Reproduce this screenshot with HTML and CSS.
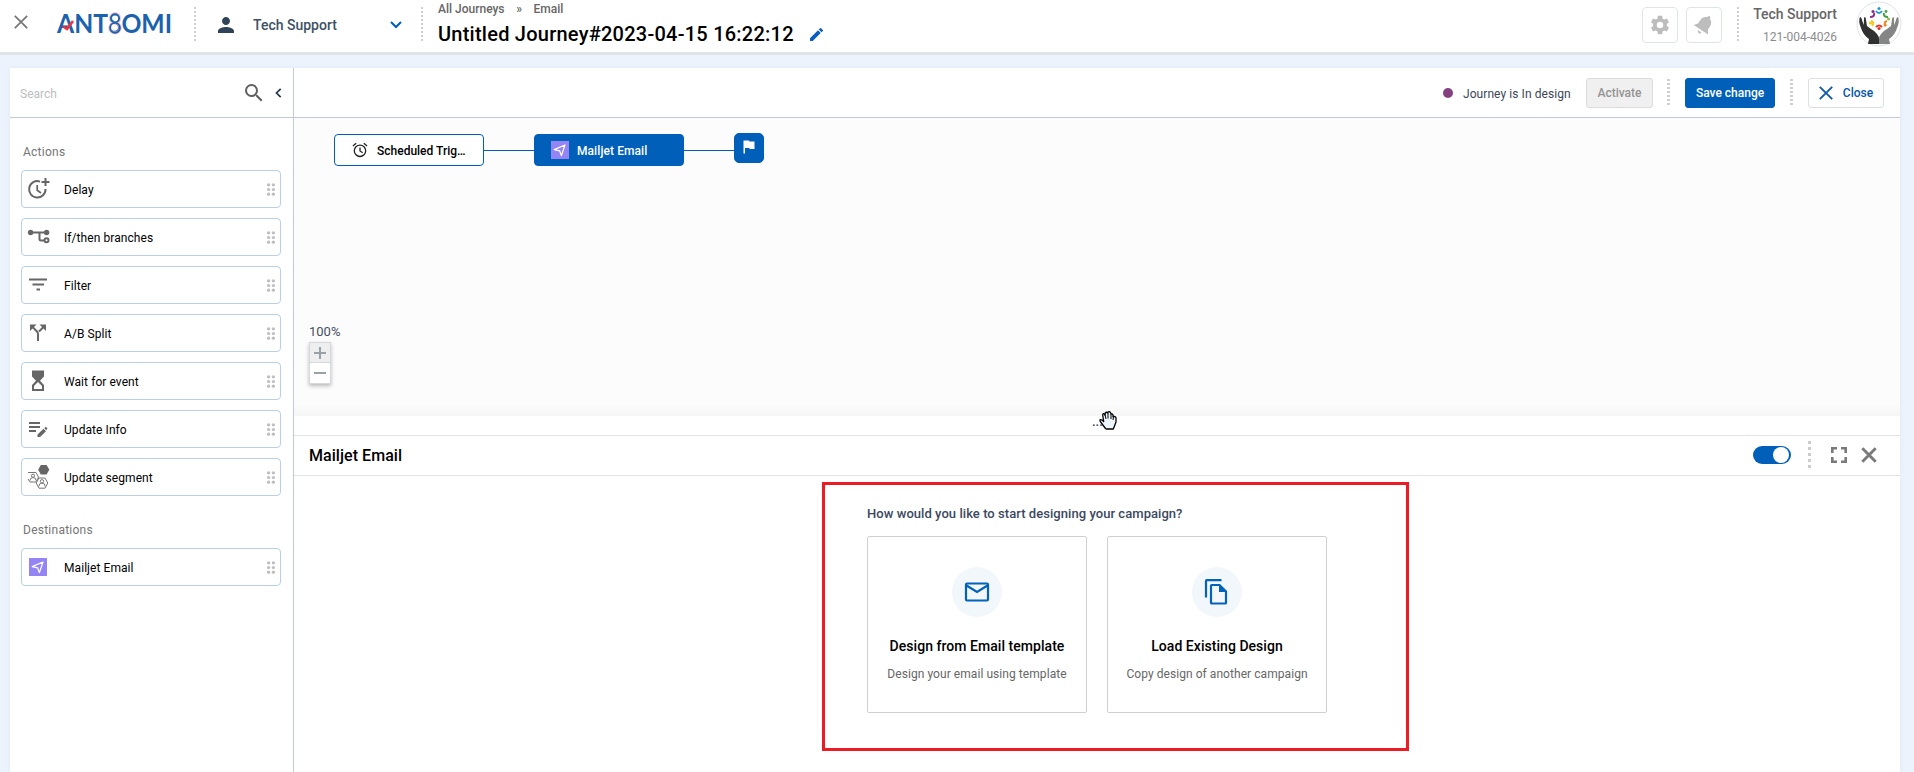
FILE: index.html
```html
<!DOCTYPE html>
<html lang="en">
<head>
<meta charset="utf-8">
<title>Untitled Journey</title>
<link rel="stylesheet" href="styles.css">
</head>
<body>
<svg class="defs" width="0" height="0">
  <symbol id="grip" viewBox="0 0 8 13"><g fill="#bdbdbd"><circle cx="1.6" cy="1.8" r="1.6"/><circle cx="6.4" cy="1.8" r="1.6"/><circle cx="1.6" cy="6.5" r="1.6"/><circle cx="6.4" cy="6.5" r="1.6"/><circle cx="1.6" cy="11.2" r="1.6"/><circle cx="6.4" cy="11.2" r="1.6"/></g></symbol>
  <symbol id="plane" viewBox="0 0 18 18"><rect width="18" height="18" fill="#9585f4"/><path d="M3.2 8.6 14 4 10.4 14.6 8.6 9.8Z" fill="none" stroke="#fff" stroke-width="1.2" stroke-linejoin="round"/></symbol>
</svg>
<header class="topbar">
  <svg class="leave" width="14" height="14" viewBox="0 0 14 14"><path d="M.8.8 13.2 13.2M13.2.8.8 13.2" stroke="#757575" stroke-width="1.7"/></svg>
  <svg class="logo" width="118" height="26" viewBox="0 0 118 26">
    <text class="logo-text" x="1" y="21.5" textLength="115" lengthAdjust="spacingAndGlyphs">ANT<tspan class="logo-s">S</tspan>OMI</text>
    <g fill="none"><g stroke="#f8ccd2" stroke-width="3"><circle cx="59" cy="7.300" r="4.700"/><circle cx="59" cy="16.800" r="5.300"/></g><g stroke="#1b62ae" stroke-width="1.900"><circle cx="59" cy="7.300" r="4.100"/><circle cx="59" cy="16.800" r="4.900"/></g></g>
    <path d="M7 15.500 11 18 17 10" fill="none" stroke="#ee3340" stroke-width="2.600"/>
  </svg>
  <i class="dots dots-a"></i>
  <svg class="person" width="16" height="16" viewBox="4 4 16 16"><path fill="#2f4459" d="M12 12c2.210 0 4-1.790 4-4s-1.790-4-4-4-4 1.790-4 4 1.790 4 4 4zm0 2c-2.670 0-8 1.340-8 4v2h16v-2c0-2.660-5.330-4-8-4z"/></svg>
  <span class="account">Tech Support</span>
  <svg class="chev" width="12" height="8" viewBox="0 0 12 8"><path d="M1 1 6 6 11 1" fill="none" stroke="#005fb8" stroke-width="2"/></svg>
  <i class="dots dots-b"></i>
  <div class="heading">
    <div class="crumbs"><span>All Journeys</span><span class="sep">»</span><span>Email</span></div>
    <div class="title-row"><h1>Untitled Journey#2023-04-15 16:22:12</h1>
      <svg width="13" height="13" viewBox="3 3 18 18"><path fill="#0a5cc0" d="M3 17.250V21h3.750L17.810 9.940l-3.750-3.750L3 17.250zM20.710 7.040a1 1 0 0 0 0-1.410l-2.340-2.340a1 1 0 0 0-1.410 0l-1.830 1.830 3.750 3.750 1.830-1.830z"/></svg></div>
  </div>
  <div class="top-right">
    <span class="icon-btn"><svg width="22" height="22" viewBox="0 0 24 24"><path fill="#bdbdbd" d="M19.430 12.980c.04-.32.07-.64.07-.98s-.03-.66-.07-.98l2.110-1.650c.19-.15.24-.42.12-.64l-2-3.460c-.12-.22-.39-.3-.61-.22l-2.490 1c-.52-.4-1.080-.73-1.690-.98l-.38-2.650C14.460 2.180 14.250 2 14 2h-4c-.25 0-.46.18-.49.42l-.38 2.650c-.61.25-1.170.59-1.690.98l-2.490-1c-.23-.09-.49 0-.61.22l-2 3.460c-.13.22-.07.49.12.64l2.110 1.650c-.04.32-.07.65-.07.98s.03.66.07.98l-2.110 1.650c-.19.15-.24.42-.12.64l2 3.460c.12.22.39.3.61.22l2.490-1c.52.4 1.080.73 1.690.98l.38 2.650c.03.24.24.42.49.42h4c.25 0 .46-.18.49-.42l.38-2.650c.61-.25 1.170-.59 1.690-.98l2.490 1c.23.09.49 0 .61-.22l2-3.460c.12-.22.07-.49-.12-.64l-2.110-1.650zM12 15.500a3.500 3.500 0 1 1 0-7 3.500 3.500 0 0 1 0 7z"/></svg></span>
    <span class="icon-btn"><svg width="24" height="24" viewBox="0 0 24 24"><g transform="rotate(33 12 12)" fill="#bdbdbd"><path d="M12 1.500c-.9 0-1.500.6-1.500 1.500v.7C7.800 4.500 6.200 6.800 6.200 9.700V14L3.400 17.700h17.200L17.800 14V9.700c0-2.900-1.600-5.200-4.300-6V3c0-.9-.6-1.500-1.500-1.500z"/><path d="M10 19.700h4a2 2 0 0 1-4 0z"/></g></svg></span>
    <i class="dots dots-c"></i>
    <div class="profile"><b>Tech Support</b><span>121-004-4026</span></div>
    <svg class="avatar" width="46" height="46" viewBox="0 0 46 46">
      <circle cx="23" cy="23" r="22" fill="#fff" stroke="#dde3ea"/>
      <path fill="#303030" d="M4 16q1.500 0 2.300 4l1.500 4 .2-7.500q1.400-1 1.800 1L11 25l4 3q4 2 6 5 2 2.500 2 5v5H12l1-5q-6-4-8-11Q2 20 4 16z"/>
      <path fill="#858585" d="M42 16q-1.500 0-2.300 4l-1.500 4-.2-7.500q-1.400-1-1.800 1L35 25l-4 3q-4 2-6 5-2 2.500-2 5v5h11l-1-5q6-4 8-11 3-7 1-11z"/>
      <g fill="none" stroke-width="2">
        <path stroke="#1f9ad6" d="M20 10q3 4 6 0"/><path stroke="#43a047" d="M28 12q-1 4 4 4"/><path stroke="#f58220" d="M31 20q-4 1-1 5"/><path stroke="#e53527" d="M26 26q-3-3-6 0"/><path stroke="#f6c51c" d="M16 25q3-4-1-5"/><path stroke="#8e2a91" d="M14 16q5 0 4-4"/>
      </g>
      <circle cx="23" cy="7.500" r="1.600" fill="#1f9ad6"/><circle cx="30" cy="10.500" r="1.400" fill="#43a047"/><circle cx="32.500" cy="18" r="1.500" fill="#8bc34a"/><circle cx="29" cy="24" r="1.500" fill="#f58220"/><circle cx="23" cy="27.500" r="1.600" fill="#e53527"/><circle cx="14.500" cy="22" r="1.600" fill="#f6c51c"/><circle cx="17" cy="10.500" r="1.600" fill="#8e2a91"/>
    </svg>
  </div>
</header>

<main class="workspace">
  <aside class="sidebar">
    <div class="search"><span>Search</span>
      <svg class="mag" width="18" height="18" viewBox="3 3 18 18"><path fill="#606060" d="M15.500 14h-.79l-.28-.27A6.470 6.470 0 0 0 16 9.500 6.500 6.500 0 1 0 9.500 16c1.610 0 3.090-.59 4.230-1.570l.27.28v.79l5 4.990L20.490 19l-4.990-5zm-6 0a4.500 4.500 0 1 1 0-9 4.500 4.500 0 0 1 0 9z"/></svg>
      <svg width="7" height="10" viewBox="0 0 7 10"><path d="M5.700.8 1.500 5 5.700 9.200" fill="none" stroke="#23384c" stroke-width="1.700"/></svg>
    </div>
    <h2 class="group">Actions</h2>
    <ul class="items">
      <li><svg class="ico" width="22" height="22" viewBox="0 0 22 22"><g fill="none" stroke="#666" stroke-width="2"><path d="M12 3.600A8.200 8.200 0 1 0 17.500 11"/><path d="M9.200 7v5.200L13 15" stroke-width="1.700"/><path d="M17.500 0v8M13.500 4h8"/></g></svg><span>Delay</span><svg class="grip" width="8" height="13"><use href="#grip"/></svg></li>
      <li><svg class="ico" width="22" height="22" viewBox="0 0 22 22"><g fill="none" stroke="#666" stroke-width="2"><path d="M2 6.500H19M11.500 7v6q0 1.500 1.500 1.500h3"/><circle cx="18.500" cy="14.200" r="2"/></g><circle cx="2.600" cy="6.500" r="2.700" fill="#666"/><circle cx="18.600" cy="6.500" r="2.700" fill="#666"/></svg><span>If/then branches</span><svg class="grip" width="8" height="13"><use href="#grip"/></svg></li>
      <li><svg class="ico" width="22" height="22" viewBox="0 0 22 22"><path d="M1 5.500H19M4.500 10.500H16M8.500 15.500H12" stroke="#666" stroke-width="2"/></svg><span>Filter</span><svg class="grip" width="8" height="13"><use href="#grip"/></svg></li>
      <li><svg class="ico" width="22" height="22" viewBox="0 0 22 22"><path d="M4.500 5 9 9.500q1 1 1 3V19M15.500 5 11 9.500" fill="none" stroke="#666" stroke-width="2"/><path fill="#666" d="M2 2.500H8.500L2 9zM18 2.500H11.500L18 9z"/></svg><span>A/B Split</span><svg class="grip" width="8" height="13"><use href="#grip"/></svg></li>
      <li><svg class="ico" width="22" height="22" viewBox="0 0 22 22"><path fill="#666" fill-rule="evenodd" d="M4 .5H16V6.500L12 10.800l4 4.300V21H4v-5.900l4-4.300L4 6.500zM10 12 6 16v3h8v-3z"/></svg><span>Wait for event</span><svg class="grip" width="8" height="13"><use href="#grip"/></svg></li>
      <li><svg class="ico" width="22" height="22" viewBox="0 0 22 22"><path d="M1 5H12M1 9H12M1 13H8" stroke="#666" stroke-width="1.800"/><path fill="#666" d="M9.500 19v-2.600l6-5.600 2.500 2.500-6 5.700zM16.300 10l1.500-1.300 1.700 1.700-1.300 1.800z"/></svg><span>Update Info</span><svg class="grip" width="8" height="13"><use href="#grip"/></svg></li>
      <li><svg class="ico" width="22" height="26" viewBox="0 0 22 26"><path fill="#666" d="M12.800 1h5.800l2.700 4.800-2.700 4.800h-5.800L10.200 5.800z"/><g fill="#fff" stroke="#777"><path d="M0 8.500h8L10.500 13 8 18H2L0 15"/><path d="M11 14h6l2.800 5-2.800 5.200h-6L8.200 19z"/><circle cx="5" cy="11.700" r="1.600"/><path d="M2 16.500q0-3 3-3t3 3"/><circle cx="14" cy="17.300" r="1.700"/><path d="M10.800 22.500q0-3.400 3.200-3.400t3.200 3.400"/></g></svg><span>Update segment</span><svg class="grip" width="8" height="13"><use href="#grip"/></svg></li>
    </ul>
    <h2 class="group group-dest">Destinations</h2>
    <ul class="items">
      <li><svg class="ico tile" width="18" height="18"><use href="#plane"/></svg><span>Mailjet Email</span><svg class="grip" width="8" height="13"><use href="#grip"/></svg></li>
    </ul>
  </aside>

  <section class="content">
    <div class="toolbar">
      <i class="status-dot"></i><span class="status">Journey is In design</span>
      <button class="btn activate">Activate</button>
      <i class="dots short"></i>
      <button class="btn save">Save change</button>
      <i class="dots short short-last"></i>
      <button class="btn close"><svg width="14" height="14" viewBox="0 0 14 14"><path d="M.8.8 13.200 13.200M13.200.8.8 13.200" stroke="#1158ac" stroke-width="1.900"/></svg>Close</button>
    </div>
    <div class="canvas">
      <div class="flow">
        <div class="node trigger"><svg width="16" height="16" viewBox="0 0 16 16"><g fill="none" stroke="#222" stroke-width="1.300"><circle cx="8" cy="8.800" r="5.700"/><path d="M8 5.500V9l2.700 1.700M.9 4 4.200 1.300M15.100 4 11.800 1.300"/></g></svg><span>Scheduled Trig…</span></div>
        <i class="link"></i>
        <div class="node mail"><svg width="18" height="18"><use href="#plane"/></svg><span>Mailjet Email</span></div>
        <i class="link"></i>
        <div class="node flag"><svg width="12" height="14" viewBox="0 0 12 14"><path fill="#fff" d="M.5.500h5.500l.4 1H11.500V9H6.600l-.4-1H2v5.500H.5z"/></svg></div>
      </div>
      <div class="zoom"><span>100%</span><div class="zoom-btns"><i class="plus"><svg width="12" height="12"><path d="M0 6H12M6 0V12" stroke="#99a0a7" stroke-width="2"/></svg></i><i><svg width="12" height="12"><path d="M0 6H12" stroke="#99a0a7" stroke-width="2"/></svg></i></div></div>
    </div>
    <div class="resizer"><span>...</span>
      <svg class="hand" width="18" height="20" viewBox="0 0 18 20"><path fill="#edf5fd" stroke="#000" stroke-width="1.300" stroke-linejoin="round" d="M6.500 17.500 2 11.500Q.2 9 1.500 8.700q1.300-.2 3.200 1.800L3.700 4Q3.600 2.500 5 2.800L6 4 6.200 2q1.500-1.500 2.500 0L9 1q1.500-1 2.500.7L12 3q1.600-.5 2 1.200v1.500Q16.500 5 17 7v4l-1.500 4-1.200 3H7.200z"/><path d="M6 3.500 7 8M9 2v5.500M12 3v5M14.500 5.500 14 9" stroke="#000" stroke-width="1"/></svg>
    </div>
    <div class="panel-head"><h3>Mailjet Email</h3>
      <span class="toggle"><i></i></span><i class="round-dots"></i>
      <svg class="full" width="16" height="16" viewBox="0 0 16 16"><path d="M1.300 6V1.300H6M10 1.300h4.700V6M14.700 10v4.700H10M6 14.700H1.300V10" fill="none" stroke="#7a7a7a" stroke-width="2.600"/></svg>
      <svg width="16" height="16" viewBox="0 0 16 16"><path d="M1.300 1.300 14.700 14.700M14.700 1.300 1.300 14.700" stroke="#7a7a7a" stroke-width="2.900"/></svg>
    </div>
    <div class="stage">
      <div class="chooser">
        <h4>How would you like to start designing your campaign?</h4>
        <div class="cards">
          <div class="card"><span class="disc"><svg width="24" height="20" viewBox="0 0 24 20"><g fill="none" stroke="#0362ba" stroke-width="2.200"><rect x="1" y="1.500" width="22" height="17" rx="1"/><path d="M1.500 3.500 12 10 22.500 3.500"/></g></svg></span><b>Design from Email template</b><p>Design your email using template</p></div>
          <div class="card"><span class="disc disc-copy"><svg width="24" height="26" viewBox="0 0 24 26"><path d="M2 18.500V2q0-.8.800-.8H17.500M7 6.800q0-.8.800-.8h7.700l6.500 6.500v11.200q0 .8-.8.800H7.800q-.8 0-.8-.8z" fill="none" stroke="#0362ba" stroke-width="2.200"/><path d="M15 6v7h7z" fill="#0362ba"/></svg></span><b>Load Existing Design</b><p>Copy design of another campaign</p></div>
        </div>
      </div>
    </div>
  </section>
</main>
</body>
</html>
```
FILE: styles.css
```css
* { box-sizing: border-box; }
body { margin: 0; height: 772px; overflow: hidden; background: #ecf3fc; font-family: Roboto, "Liberation Sans", sans-serif; font-size: 12px; color: #000; display: flex; flex-direction: column; }
svg { display: block; flex: none; overflow: visible; }
.defs { position: absolute; }
h1, h2, h3, h4, p, ul { margin: 0; padding: 0; font-weight: 400; }
i { display: block; flex: none; }
button { font-family: inherit; }

.topbar { height: 55px; flex: none; background: #fff; border-bottom: 3px solid #e0e3ea; display: flex; align-items: flex-start; padding-left: 14px; }
.leave { margin-top: 15px; }
.logo { margin: 11px 0 0 28px; }
.logo-text { font: 700 26px Lato, sans-serif; fill: #1b62ae; }
.logo-s { font-weight: 400; }
.dots { width: 2px; height: 34px; margin-top: 7px; background: repeating-linear-gradient(#cfcfcf 0 2px, transparent 2px 4px); }
.dots-a { margin-left: 20px; }
.person { margin: 17px 0 0 22px; }
.account { width: 137px; margin: 16px 0 0 19px; font-size: 14px; line-height: 18px; font-weight: 500; color: #3d5166; }
.chev { margin-top: 21px; }
.dots-b { margin-left: 19px; }
.heading { margin-left: 15px; }
.crumbs { display: flex; height: 18px; line-height: 18px; font-weight: 500; color: #666; }
.sep { width: 29px; text-align: center; }
.title-row { display: flex; align-items: center; gap: 16px; height: 32px; }
.title-row h1 { font-size: 20px; font-weight: 500; white-space: nowrap; letter-spacing: .24px; }
.top-right { margin-left: auto; padding-right: 12px; display: flex; }
.icon-btn { width: 36px; height: 36px; margin: 7px 8px 0 0; border: 1px solid #dfe4ec; border-radius: 4px; display: flex; align-items: center; justify-content: center; }
.dots-c { margin-left: 7px; }
.profile { width: 98px; display: flex; flex-direction: column; align-items: flex-end; line-height: 18px; padding-top: 5px; gap: 5px; color: #8c8c8c; }
.profile b { font-size: 14px; font-weight: 500; color: #666; }
.avatar { margin: 1px 0 0 19px; }

.workspace { margin: 13px 14px 0 10px; flex: 1; display: flex; background: #fff; min-height: 0; box-shadow: 0 0 4px #7a93b81f; }
.sidebar { width: 284px; flex: none; border-right: 1px solid #c0c9de; }
.search { height: 50px; border-bottom: 1px solid #c0c9de; display: flex; align-items: center; padding: 1px 11px 0 10px; color: #bdbdbd; }
.search span { flex: 1; padding-top: 2px; }
.mag { margin-right: 12px; }
.group { margin: 24px 0 0 13px; height: 20px; line-height: 20px; font-size: 12px; color: #757575; letter-spacing: .25px; }
.group-dest { margin-top: 24px; }
.items { list-style: none; padding: 8px 12px 0 11px; display: flex; flex-direction: column; gap: 10px; letter-spacing: .07px; }
.items li { height: 38px; border: 1px solid #b9cfe8; border-radius: 4px; display: flex; align-items: center; padding: 0 5px 0 6px; }
.items span { flex: 1; padding-top: 2px; }
.ico { margin-right: 14px; }
.tile { margin: 0 17px 0 1px; }

.content { flex: 1; display: flex; flex-direction: column; min-width: 0; }
.toolbar { height: 50px; border-bottom: 1px solid #c0c9de; display: flex; align-items: center; justify-content: flex-end; padding-right: 16px; }
.status-dot { width: 10px; height: 10px; border-radius: 50%; background: #85417f; margin-right: 10px; }
.status { width: 123px; padding-top: 2px; color: #3b4655; white-space: nowrap; letter-spacing: .07px; }
.btn { height: 30px; border: 1px solid #005fb8; border-radius: 3px; padding: 0; font-size: 12px; font-weight: 500; }
.activate { width: 67px; background: #f0f0f0; border-color: #dcdcdc; color: #949494; }
.short { width: 3px; height: 28px; margin: 0 15px 0 14px; }
.short-last { margin-left: 15px; }
.save { width: 90px; background: #005fb8; color: #fff; }
.close { width: 76px; background: #fff; border-color: #dcdfe5; color: #0457ad; display: flex; align-items: center; justify-content: center; gap: 10px; }

.canvas { height: 298px; flex: none; background: linear-gradient(#fcfcfc calc(100% - 12px), #f6f6f6); display: flex; flex-direction: column; justify-content: space-between; }
.flow { display: flex; align-items: center; padding: 15px 0 0 40px; height: 49px; }
.node { display: flex; align-items: center; width: 150px; height: 32px; border: 1px solid #005fb8; border-radius: 4px; padding-left: 16px; font-weight: 500; }
.node span { padding-top: 2px; }
.trigger { background: #fff; padding-left: 17px; }
.trigger span { margin-left: 9px; }
.mail { background: #005fb8; color: #fff; }
.mail span { margin-left: 8px; letter-spacing: .08px; }
.link { width: 50px; height: 1px; background: #005fb8; }
.flag { width: 30px; height: 30px; margin-bottom: 4px; padding: 0 0 2px 8px; background: #005fb8; border-radius: 5px; }
.zoom { margin: 0 0 32px 15px; width: 40px; color: #444f5e; }
.zoom span { display: block; line-height: 20px; font-size: 13px; }
.zoom-btns { width: 22px; height: 42px; border: 1px solid #d5d8dc; box-shadow: 0 2px 4px #0004; background: #fff; }
.zoom-btns i { height: 20px; display: flex; align-items: center; justify-content: center; }
.zoom-btns .plus { background: #eee; border-bottom: 1px solid #d5d8dc; }
.resizer { height: 20px; flex: none; border-bottom: 1px solid #e1e3e6; padding-left: 798px; position: relative; line-height: 12px; font-size: 13px; font-weight: 500; color: #345; }
.hand { position: absolute; left: 805px; top: -5px; }
.panel-head { height: 40px; flex: none; border-bottom: 1px solid #e1e3e6; display: flex; align-items: center; padding: 0 23px 1px 15px; }
.panel-head h3 { flex: 1; font-size: 16px; font-weight: 500; letter-spacing: .05px; }
.toggle { width: 38px; height: 18px; border-radius: 9px; background: #005fb8; padding: 1px 2px 1px 20px; }
.toggle i { width: 16px; height: 16px; border-radius: 50%; background: #fff; }
.round-dots { width: 3px; height: 28px; margin: 0 20px 0 17px; background: radial-gradient(circle at 1.5px 1.5px, #ccc 1.5px, transparent 1.9px) 0 0 / 3px 6px; }
.full { margin-right: 14px; }
.stage { flex: 1; display: flex; justify-content: center; align-items: flex-start; padding: 6px 0 0 37px; }
.chooser { width: 587px; height: 269px; border: 3px solid #ed1c24; padding: 19px 0 0 42px; }
.chooser h4 { height: 20px; line-height: 20px; font-size: 13px; font-weight: 500; color: #3b4860; letter-spacing: .05px; }
.cards { display: flex; gap: 20px; margin-top: 12px; }
.card { width: 220px; height: 177px; border: 1px solid #d0d0d0; border-radius: 2px; display: flex; flex-direction: column; align-items: center; padding-top: 30px; }
.disc { width: 50px; height: 50px; border-radius: 50%; background: #f2f7fc; display: flex; align-items: center; justify-content: center; }
.disc-copy { padding-right: 2px; }
.card b { font-size: 14px; line-height: 20px; font-weight: 500; margin-top: 19px; letter-spacing: .04px; }
.card p { line-height: 18px; margin-top: 9px; color: #666; letter-spacing: .06px; }
```
